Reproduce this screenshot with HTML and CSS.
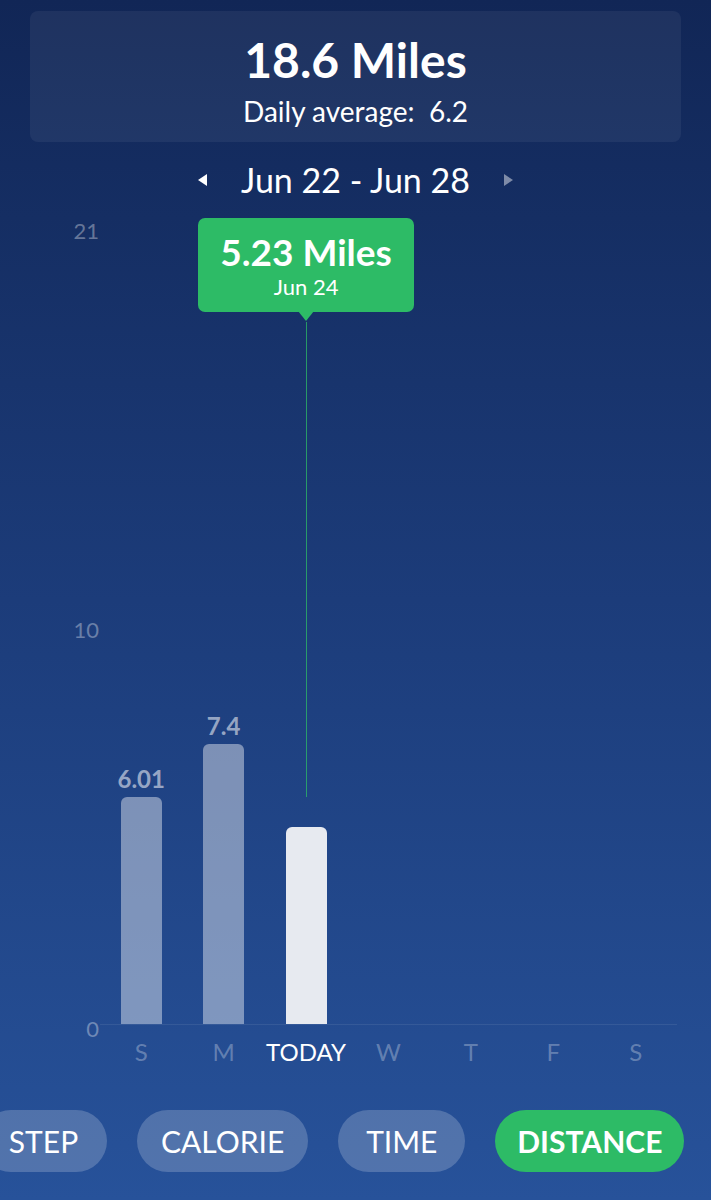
FILE: index.html
```html
<!DOCTYPE html>
<html lang="en">
<head>
    <meta charset="UTF-8">
    <meta name="viewport" content="width=device-width, initial-scale=1.0">
    <title>Distance</title>
    <link rel="stylesheet" href="styles.css">
</head>
<body>
    <div class="screen">
        <div class="summary">
            <div class="summary-total">18.6 Miles</div>
            <div class="summary-avg">Daily average:&nbsp;&nbsp;6.2</div>
        </div>

        <div class="week-nav">
            <span class="nav-arrow prev"></span>
            <span class="week-label">Jun 22 - Jun 28</span>
            <span class="nav-arrow next"></span>
        </div>

        <div class="chart">
            <div class="axis">
                <span>21</span>
                <span>10</span>
                <span>0</span>
            </div>
            <div class="plot">
                <div class="col">
                    <span class="bar-value">6.01</span>
                    <div class="bar" style="height: 227px"></div>
                </div>
                <div class="col">
                    <span class="bar-value">7.4</span>
                    <div class="bar" style="height: 280px"></div>
                </div>
                <div class="col">
                    <div class="bar today" style="height: 197px"></div>
                </div>
                <div class="col"></div>
                <div class="col"></div>
                <div class="col"></div>
                <div class="col"></div>

                <div class="tooltip">
                    <div class="tooltip-value">5.23 Miles</div>
                    <div class="tooltip-date">Jun 24</div>
                </div>
                <div class="tooltip-line"></div>
            </div>
        </div>

        <div class="days">
            <span>S</span>
            <span>M</span>
            <span class="current">TODAY</span>
            <span>W</span>
            <span>T</span>
            <span>F</span>
            <span>S</span>
        </div>

        <div class="tabs">
            <button class="tab">STEP</button>
            <button class="tab">CALORIE</button>
            <button class="tab">TIME</button>
            <button class="tab active">DISTANCE</button>
        </div>
    </div>
</body>
</html>
```

FILE: styles.css
```css
body {
    margin: 0;
    padding: 0;
    font-family: Lato, "Open Sans", sans-serif;
    color: white;
    overflow: hidden;
}
.screen {
    width: 711px;
    height: 1200px;
    background: linear-gradient(to bottom, #112656 0%, #1c3c7a 50%, #27529a 100%);
    padding-top: 11px;
    box-sizing: border-box;
    overflow: hidden;
}
.summary {
    margin: 0 30px;
    height: 131px;
    box-sizing: border-box;
    padding-top: 6px;
    background-color: rgba(255, 255, 255, 0.06);
    border-radius: 8px;
    display: flex;
    flex-direction: column;
    align-items: center;
    justify-content: center;
}
.summary-total {
    font-size: 48px;
    font-weight: bold;
    line-height: 56px;
}
.summary-avg {
    font-size: 28px;
    line-height: 34px;
    margin-top: 6px;
}
.week-nav {
    display: flex;
    align-items: center;
    justify-content: center;
    gap: 34px;
    height: 60px;
    margin-top: 8px;
}
.week-label {
    font-size: 34px;
    line-height: 40px;
}
.nav-arrow {
    width: 0;
    height: 0;
    border-top: 6px solid transparent;
    border-bottom: 6px solid transparent;
}
.nav-arrow.prev {
    border-right: 9px solid white;
}
.nav-arrow.next {
    border-left: 9px solid rgba(255, 255, 255, 0.45);
}
.chart {
    display: flex;
    margin-top: 21px;
    height: 794px;
}
.axis {
    width: 99px;
    display: flex;
    flex-direction: column;
    justify-content: space-between;
    align-items: flex-end;
    margin: -13px 0 -17px;
    font-size: 22px;
    line-height: 26px;
    color: rgba(255, 255, 255, 0.35);
}
.plot {
    position: relative;
    margin-left: 1px;
    width: 577px;
    display: grid;
    grid-template-columns: repeat(7, 1fr);
    border-bottom: 1px solid rgba(255, 255, 255, 0.08);
}
.col {
    display: flex;
    flex-direction: column;
    align-items: center;
    justify-content: flex-end;
}
.bar {
    width: 41px;
    background-color: rgba(255, 255, 255, 0.42);
    border-radius: 6px 6px 0 0;
}
.bar.today {
    background-color: #e7eaf0;
}
.bar-value {
    font-size: 24px;
    font-weight: bold;
    line-height: 26px;
    margin-bottom: 5px;
    color: rgba(255, 255, 255, 0.55);
}
.tooltip {
    position: absolute;
    top: -13px;
    left: calc(100% * 2.5 / 7);
    transform: translateX(-50%);
    width: 216px;
    height: 94px;
    box-sizing: border-box;
    padding-top: 13px;
    background-color: #2dbb66;
    border-radius: 7px;
    display: flex;
    flex-direction: column;
    align-items: center;
}
.tooltip::after {
    content: "";
    position: absolute;
    bottom: -9px;
    left: 50%;
    margin-left: -8px;
    border-left: 8px solid transparent;
    border-right: 8px solid transparent;
    border-top: 10px solid #2dbb66;
}
.tooltip-value {
    font-size: 37px;
    font-weight: bold;
    line-height: 42px;
}
.tooltip-date {
    font-size: 22px;
    line-height: 28px;
}
.tooltip-line {
    position: absolute;
    top: 91px;
    left: calc(100% * 2.5 / 7);
    width: 1px;
    height: 475px;
    background-color: #2dbb66;
    opacity: 0.75;
}
.days {
    display: grid;
    grid-template-columns: repeat(7, 1fr);
    width: 577px;
    margin-left: 100px;
    margin-top: 12px;
    font-size: 24px;
    line-height: 30px;
    text-align: center;
    color: rgba(255, 255, 255, 0.3);
}
.days .current {
    color: white;
}
.tabs {
    display: flex;
    gap: 30px;
    margin-top: 43px;
    margin-left: -20px;
}
.tab {
    flex: none;
    height: 62px;
    min-width: 127px;
    padding: 0 24px;
    border: none;
    border-radius: 31px;
    background-color: rgba(255, 255, 255, 0.2);
    color: white;
    font-family: Lato, "Open Sans", sans-serif;
    font-size: 30px;
}
.tab.active {
    padding: 0 22px;
    background-color: #2dbb66;
    font-weight: bold;
}
```
